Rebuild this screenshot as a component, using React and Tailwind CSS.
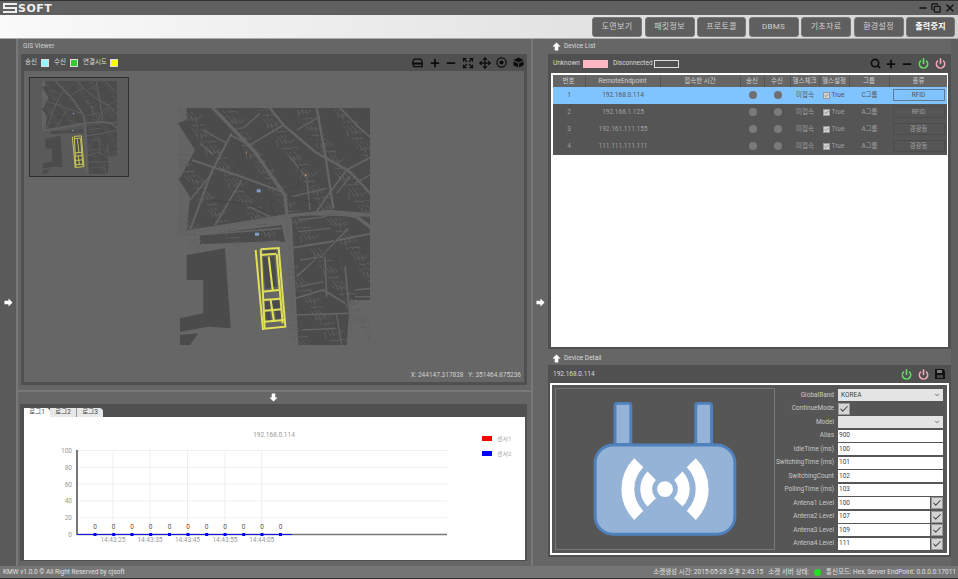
import { Plus, Minus, Move, Expand, Power, Search, Copy, X, Check, ChevronDown } from 'lucide-react';

const menus = [
  { label: '도면보기', w: 'w-[50px]' },
  { label: '패킷정보', w: 'w-[50px]' },
  { label: '프로토콜', w: 'w-[49px]' },
  { label: 'DBMS', w: 'w-[50px]' },
  { label: '기초자료', w: 'w-[50px]' },
  { label: '환경설정', w: 'w-[50px]' },
  { label: '출력중지', w: 'w-[49px]', active: true },
];

const devices = [
  { id: 1, ip: '192.168.0.114', group: 'C그룹', type: 'RFID' },
  { id: 2, ip: '192.168.1.125', group: 'A그룹', type: 'RFID' },
  { id: 3, ip: '192.161.111.155', group: 'A그룹', type: '경광등' },
  { id: 4, ip: '111.111.111.111', group: 'A그룹', type: '경광등' },
];

const fields = [
  { label: 'GlobalBand', kind: 'select', value: 'KOREA' },
  { label: 'ContinueMode', kind: 'check' },
  { label: 'Model', kind: 'select', value: '' },
  { label: 'Alias', value: '900' },
  { label: 'IdleTime (ms)', value: '100' },
  { label: 'SwitchingTime (ms)', value: '101' },
  { label: 'SwitchingCount', value: '102' },
  { label: 'PollingTime (ms)', value: '103' },
  { label: 'Antena1 Level', value: '100', toggle: true },
  { label: 'Antena2 Level', value: '107', toggle: true },
  { label: 'Antena3 Level', value: '109', toggle: true },
  { label: 'Antena4 Level', value: '111', toggle: true },
];

const tableCols = 'grid grid-cols-[33px_75px_80px_24px_26px_29px_30px_40px_58px]';

// roads of the map, in the 630x750 space of the drawing
const roads = [
  ['125,20 250,150 345,285 358,420 372,740', 10],
  ['24,405 200,375 345,348 480,335 560,350 605,385', 10],
  ['300,24 340,75 435,155 540,215 605,285', 7],
  ['440,24 465,160 490,325', 7],
  ['65,180 200,225 335,275', 6],
  ['185,100 125,215 62,385', 6],
  ['605,170 530,210 470,290 440,335', 5],
  ['360,445 480,425 605,400', 6],
  ['380,530 470,450 535,385', 5],
  ['375,595 460,570 525,610', 5],
  ['375,645 540,640', 5],
  ['510,24 570,85 605,115', 5],
  ['340,75 240,135 180,105', 5],
  ['130,215 60,300', 5],
  ['215,240 135,375', 5],
  ['235,320 300,350', 4],
  ['365,290 470,265', 4],
  ['360,170 410,235 420,330', 4],
  ['85,405 335,385', 5],
  ['85,435 330,425', 5],
  ['465,470 470,590', 5],
  ['525,500 545,700', 5],
  ['500,645 515,735', 4],
  ['555,570 605,565', 4],
  ['555,590 605,590', 4],
  ['385,360 470,350', 4],
  ['385,395 480,385', 4],
  ['540,230 500,280', 4],
  ['555,250 600,225', 4],
  ['380,90 450,50', 4],
  ['270,40 220,85', 4],
  ['100,90 170,130', 4],
  ['90,130 130,165', 4],
  ['390,480 460,470', 4],
  ['390,560 460,545', 4],
  ['395,690 500,685', 4],
];

// dark hairline streets between the blocks
const darkLines = [
  '210,130 220,175 190,210',
  '390,200 385,260 360,270',
  '360,290 440,310',
  '120,300 230,310 300,340',
  '300,300 310,345',
  '395,525 520,395',
  '470,500 500,470 510,520',
  '480,560 520,600',
];

const yellow = [
  '257,450 279,690',
  '272,448 326,444 346,680 284,686 272,448',
  '272,465 318,461',
  '320,462 338,670',
  '276,575 328,570',
  '278,600 331,596',
  '284,665 342,660',
  '296,470 308,570',
  '302,600 312,665',
  '282,632 335,628',
];

const lotBuildings = [
  '278,472 294,470 303,565 286,567',
  '300,470 313,468 321,560 309,562',
  '284,605 299,604 301,628 286,630',
  '305,603 328,601 330,626 308,628',
  '288,636 300,635 304,662 290,663',
  '316,632 333,630 336,656 318,658',
  '278,452 318,449 319,458 280,461',
];

// deterministic alley lines so both map copies look alike
const alleys = [];
for (let i = 0; i < 900; i++) {
  const x = 26 + ((i * 137) % 572);
  const y = 26 + ((i * 211) % 705);
  if (y > 430 && x < 352) continue;
  const len = 8 + (i % 6) * 3;
  const dir = i % 4;
  const dx = dir === 0 ? len : dir === 1 ? len * 0.7 : dir === 2 ? 3 : len * 0.8;
  const dy = dir === 0 ? 3 : dir === 1 ? len * 0.7 : dir === 2 ? len : -len * 0.6;
  alleys.push(`M${x} ${y}l${dx.toFixed(1)} ${dy.toFixed(1)}`);
}

function CityMap({ className }) {
  return (
    <svg viewBox="24 24 576 711" className={className}>
      <polygon fill="#4b4b4b" points="24,24 600,24 600,340 480,330 340,345 24,395" />
      <polygon fill="#4b4b4b" points="365,345 600,350 600,600 540,600 530,735 385,735" />
      <polygon fill="#4b4b4b" points="90,405 335,375 345,425 90,435" />
      <polygon fill="#646464" points="24,24 50,24 50,60 24,70" />
      <polygon fill="#646464" points="24,70 75,150 30,235 24,235" />
      <polygon fill="#646464" points="24,235 60,290 50,395 24,395" />
      <path d={alleys.join('')} stroke="#5e5e5e" strokeWidth="3" fill="none" />
      <polygon fill="#4b4b4b" points="50,465 165,445 182,685 115,680 30,695 30,655 100,640 100,540 50,540" />
      <polygon fill="#4b4b4b" points="30,705 85,700 60,735 30,735" />
      {roads.map(([points, width]) => (
        <polyline key={points} points={points} fill="none" stroke="#646464" strokeWidth={width} />
      ))}
      {darkLines.map((points) => (
        <polyline key={points} points={points} fill="none" stroke="#444" strokeWidth="3" />
      ))}
      {lotBuildings.map((points) => (
        <polygon key={points} points={points} fill="#4b4b4b" />
      ))}
      {yellow.map((points) => (
        <polyline key={points} points={points} fill="none" stroke="#e0e055" strokeWidth="6" />
      ))}
      <rect x="260" y="268" width="12" height="9" fill="#7f9fc4" />
      <rect x="255" y="398" width="12" height="9" fill="#7f9fc4" />
      <rect x="227" y="155" width="4" height="6" fill="#a0714f" />
      <rect x="405" y="222" width="4" height="6" fill="#b89270" />
    </svg>
  );
}

function BlockArrow({ className }) {
  return (
    <svg viewBox="0 0 10 10" className={`w-[9px] h-[9px] ${className}`}>
      <path d="M5 0.5L9.5 5H7V9.5H3V5H0.5Z" fill="#fff" />
    </svg>
  );
}

function CheckBox({ className }) {
  return (
    <span className={`flex items-center justify-center bg-[#d4d4d4] border border-[#999] ${className}`}>
      <Check className="w-full h-full text-[#444]" strokeWidth={2.5} />
    </span>
  );
}

function Swatch({ className }) {
  return <span className={`block shrink-0 border border-[#ddd] ${className}`} />;
}

function GisToolbarIcons() {
  return (
    <div className="flex items-center gap-[2.7px] text-[#0c0c0c] -mr-[1px] [&>*]:w-[14px] [&>*]:flex [&>*]:justify-center">
      <span>
        <svg viewBox="0 0 14 12" className="w-[11px] h-[10px]">
          <path d="M3 1H11L13 4V10.5H2.5L1 7V4Z" fill="none" stroke="currentColor" strokeWidth="1.6" />
          <path d="M1 5.5H13V8H1Z" fill="currentColor" />
        </svg>
      </span>
      <span><Plus className="w-[12px] h-[12px]" strokeWidth={3.5} /></span>
      <span><Minus className="w-[12px] h-[12px]" strokeWidth={3.5} /></span>
      <span><Expand className="w-[12px] h-[12px]" strokeWidth={2.5} /></span>
      <span><Move className="w-[12px] h-[12px]" strokeWidth={2.5} /></span>
      <span>
        <svg viewBox="0 0 12 12" className="w-[11px] h-[11px]">
          <circle cx="6" cy="6" r="5" fill="none" stroke="currentColor" strokeWidth="1.3" />
          <circle cx="6" cy="6" r="2.2" fill="currentColor" />
        </svg>
      </span>
      <span>
        <svg viewBox="0 0 12 12" className="w-[11px] h-[11px]">
          <path d="M6 0.5L11.5 3.2L6 5.9L0.5 3.2Z" fill="currentColor" />
          <path d="M0.5 4.6L5.5 7V11.5L0.5 9Z M11.5 4.6L6.5 7V11.5L11.5 9Z" fill="currentColor" />
        </svg>
      </span>
    </div>
  );
}

function LogChart() {
  const ticks = [0, 20, 40, 60, 80, 100];
  const points = [71, 89.7, 108, 126.7, 145.5, 164, 182.7, 201, 219.7, 238, 256.5];
  const times = [
    [89, '14:43:25'],
    [126, '14:43:35'],
    [163.5, '14:43:45'],
    [201, '14:43:55'],
    [237.7, '14:44:05'],
  ];
  const yOf = (v) => 117.5 - v * 0.84;

  return (
    <svg width="501" height="143" className="block">
      <text x="250" y="20" textAnchor="middle" fontSize="6.5" fill="#999">192.168.0.114</text>
      {ticks.map((t) => (
        <g key={t}>
          {t > 0 && <line x1="53" x2="423" y1={yOf(t)} y2={yOf(t)} stroke="#f0f0f0" />}
          <text x="48" y={yOf(t) + 2.5} textAnchor="end" fontSize="6.5" fill="#999">{t}</text>
        </g>
      ))}
      {times.map(([x, label]) => (
        <g key={label}>
          <line x1={x} x2={x} y1="33" y2="117" stroke="#eee" />
          <text x={x} y="125" textAnchor="middle" fontSize="6.5" fill="#999">{label}</text>
        </g>
      ))}
      <line x1="53" x2="53" y1="33" y2="118" stroke="#777" strokeWidth="2" />
      <line x1="53" x2="423" y1="117.5" y2="117.5" stroke="#777" strokeWidth="1.5" />
      <line x1="53" x2="268" y1="117.5" y2="117.5" stroke="#1414e0" strokeWidth="1.2" />
      {points.map((x) => (
        <g key={x}>
          <rect x={x - 1.5} y="116" width="3" height="3" fill="#0000ee" />
          <text x={x} y="112" textAnchor="middle" fontSize="6.5" fill="#555">0</text>
        </g>
      ))}
      <rect x="458" y="19" width="10" height="5" fill="#ff0000" />
      <text x="473" y="24" fontSize="6" fill="#aaa">센서1</text>
      <rect x="458" y="34" width="10" height="5" fill="#0000ff" />
      <text x="473" y="39" fontSize="6" fill="#aaa">센서2</text>
    </svg>
  );
}

function RouterIcon() {
  return (
    <svg viewBox="0 0 220 161" className="w-full h-full">
      <g fill="#95b3d7" stroke="#4f81bd" strokeWidth="3">
        <path d="M59.5 56V17a2.5 2.5 0 0 1 2.5-2.5h11a2.5 2.5 0 0 1 2.5 2.5V56Z" />
        <path d="M141 56V17a2.5 2.5 0 0 1 2.5-2.5h11a2.5 2.5 0 0 1 2.5 2.5V56Z" />
        <rect x="39.5" y="56.5" width="141" height="90" rx="18" />
      </g>
      <g transform="translate(110 101)" fill="none" stroke="#fff">
        <circle r="8" fill="#fff" stroke="none" />
        <path d="M-13.4 -13.4A19 19 0 0 0 -13.4 13.4M13.4 -13.4A19 19 0 0 1 13.4 13.4" strokeWidth="12" />
        <path d="M-26.5 -26.5A37.5 37.5 0 0 0 -26.5 26.5M26.5 -26.5A37.5 37.5 0 0 1 26.5 26.5" strokeWidth="13" />
      </g>
    </svg>
  );
}

function DeviceRow({ device, selected }) {
  const text = selected ? 'text-[#555]' : 'text-[#a0a0a0]';
  return (
    <div className={`${tableCols} h-[17px] items-center text-center ${text} ${selected ? 'bg-[#80c4ff]' : 'bg-[#555555]'}`}>
      <span>{device.id}</span>
      <span>{device.ip}</span>
      <span />
      <span className={`justify-self-center w-[8px] h-[8px] rounded-full ${selected ? 'bg-[#707070]' : 'bg-[#7a7a7a]'}`} />
      <span className={`justify-self-center w-[8px] h-[8px] rounded-full ${selected ? 'bg-[#707070]' : 'bg-[#7a7a7a]'}`} />
      <span>미접속</span>
      <span className="flex items-center gap-[2px] pl-[3px]">
        <CheckBox className="w-[7px] h-[7px]" />
        True
      </span>
      <span>{device.group}</span>
      <span className={`mx-[3px] h-[12px] leading-[10px] border ${selected ? 'border-[#5f7a92]' : 'border-[#4b4b4b]'}`}>{device.type}</span>
    </div>
  );
}

function DetailField({ field }) {
  return (
    <div className="flex items-center h-[12px]">
      <span className="w-[56px] flex justify-end text-[#c8c8c8] whitespace-nowrap">{field.label}</span>
      <div className="flex flex-1 ml-[4px] h-full text-[#444] gap-[1px]">
        {field.kind === 'check' ? (
          <CheckBox className="w-[12px] h-[12px]" />
        ) : field.kind === 'select' ? (
          <div className="flex-1 bg-[#e4e4e4] flex items-center justify-between px-[3px]">
            <span>{field.value}</span>
            <ChevronDown className="w-[6px] h-[6px]" strokeWidth={3} />
          </div>
        ) : (
          <div className="flex-1 bg-white flex items-center px-[1px]">{field.value}</div>
        )}
        {field.toggle && <CheckBox className="w-[12px] h-[12px]" />}
      </div>
    </div>
  );
}

export default function App() {
  return (
    <div className="w-[958px] h-[579px] flex flex-col overflow-hidden bg-[#666666] text-[6.5px] leading-none text-[#d8d8d8] [font-family:'Roboto','Noto_Sans_CJK_KR',sans-serif]">
      {/* title bar */}
      <div className="h-[15px] flex items-center justify-between bg-[#606060] border-t border-[#333] pl-[3px] pr-[2px]">
        <div className="flex items-center gap-[1px]">
          <svg viewBox="0 0 14 10" className="w-[14px] h-[10px]">
            <path d="M0 0H14V2H2V4H14V10H0V8H12V6H0Z" fill="#eee" />
          </svg>
          <span className="text-[11px] font-bold tracking-[0.5px] text-[#eee] [font-family:'DejaVu_Sans',sans-serif]">SOFT</span>
        </div>
        <div className="flex items-center gap-[3px] text-[#111]">
          <Minus className="w-[10px] h-[10px]" strokeWidth={4} />
          <Copy className="w-[10px] h-[10px]" strokeWidth={3} />
          <X className="w-[12px] h-[12px]" strokeWidth={3} />
        </div>
      </div>

      {/* ribbon */}
      <div className="h-[24px] flex items-center justify-end gap-[2.5px] pr-[3px] bg-gradient-to-r from-[#fafafa] to-[#d4d4d4] border-b border-[#aaa]">
        {menus.map((menu) => (
          <button
            key={menu.label}
            className={`${menu.w} h-[20px] rounded-[3px] bg-[#5f5f5f] border border-[#777] text-[8px] tracking-[0.3px] ${menu.active ? 'text-white font-bold' : 'text-[#cfcfcf]'}`}
          >
            {menu.label}
          </button>
        ))}
      </div>

      {/* main */}
      <div className="flex-1 flex min-h-0">
        <div className="w-[18px] flex items-center justify-center bg-[#5a5a5a] border-r-2 border-[#787878]">
          <BlockArrow className="rotate-90" />
        </div>

        {/* left column */}
        <div className="w-[513px] flex flex-col">
          <div className="h-[15px] flex items-center pl-[5px] text-[#cfcfcf]">GIS Viewer</div>

          <div className="h-[331px] ml-[3px] mr-[4px] flex flex-col bg-[#505050] px-[3px] pb-[3px]">
            <div className="h-[17px] shrink-0 flex items-center justify-between">
              <div className="flex items-center pl-[1px] whitespace-nowrap">
                <span className="w-[12px]">송신</span>
                <Swatch className="w-[8px] h-[8px] ml-[4px] mr-[5px] bg-[#8ff5ff]" />
                <span className="w-[11px]">수신</span>
                <Swatch className="w-[8px] h-[8px] ml-[5px] mr-[5px] bg-[#33cc33]" />
                <span className="w-[23px]">연결시도</span>
                <Swatch className="w-[8px] h-[8px] ml-[4px] bg-[#ffff00]" />
              </div>
              <GisToolbarIcons />
            </div>
            <div className="relative flex-1 bg-[#666666]">
              <div className="absolute left-[5px] top-[6px] w-[100px] h-[100px] bg-[#5a5a5a] border border-[#2f2f2f] flex justify-center items-center">
                <CityMap className="w-[75px] h-[93px]" />
              </div>
              <CityMap className="absolute left-[154px] top-[37px] w-[192px] h-[237px]" />
              <span className="absolute right-[3px] bottom-[4px] text-[#d0d0d0] whitespace-nowrap">X: 244147.317828 &nbsp; Y: 351464.875236</span>
            </div>
          </div>

          {/* splitter */}
          <div className="h-[19px] pt-[5px]">
            <div className="h-full border-t-2 border-[#787878] flex items-center justify-center pb-[1px] pr-[3px]">
              <BlockArrow className="rotate-180" />
            </div>
          </div>

          <div className="h-[157px] ml-[2px] mr-[4px] flex flex-col bg-[#505050] pl-[4px] pr-[2px] pb-[1px]">
            <div className="h-[13px] shrink-0 flex items-end text-[#444]">
              <span className="h-[9px] w-[26px] flex items-center justify-center bg-white rounded-tr-[4px]">로그1</span>
              <span className="h-[9px] w-[27px] flex items-center justify-center bg-[#e8e8e8] border-r border-[#999]">로그2</span>
              <span className="h-[9px] w-[26px] flex items-center justify-center bg-[#e8e8e8] rounded-tr-[4px]">로그3</span>
            </div>
            <div className="flex-1 bg-white">
              <LogChart />
            </div>
          </div>
        </div>

        {/* center strip */}
        <div className="w-[17px] flex items-center justify-center border-l-2 border-[#787878]">
          <BlockArrow className="rotate-90" />
        </div>

        {/* right column */}
        <div className="w-[403px] flex flex-col">
          <div className="h-[15px] flex items-center gap-[3px] pl-[4px]">
            <BlockArrow />
            <span>Device List</span>
          </div>

          <div className="h-[295px] flex flex-col bg-[#505050] px-[3px] pb-[2px]">
            <div className="h-[19px] shrink-0 flex items-center justify-between pr-[2px]">
              <div className="flex items-center pl-[2px] whitespace-nowrap">
                <span className="w-[26px]">Unknown</span>
                <Swatch className="w-[25px] h-[8px] ml-[4px] mr-[5px] bg-[#ffb6c1] border-[#ffb6c1]" />
                <span className="w-[37px]">Disconnected</span>
                <Swatch className="w-[25px] h-[8px] ml-[4px] border-[#bbb]" />
              </div>
              <div className="flex items-center gap-[4px] text-[#0c0c0c]">
                <Search className="w-[11px] h-[11px]" strokeWidth={3.5} />
                <Plus className="w-[12px] h-[12px]" strokeWidth={3.5} />
                <Minus className="w-[12px] h-[12px]" strokeWidth={3.5} />
                <Power className="w-[11px] h-[11px] ml-[1px] text-[#66dd66]" strokeWidth={3.5} />
                <Power className="w-[11px] h-[11px] ml-[2px] text-[#f0a8b8]" strokeWidth={3.5} />
              </div>
            </div>
            <div className="flex-1 bg-white p-[1.5px]">
              <div className={`${tableCols} h-[12px] items-center text-center bg-[#666666] text-[#cfcfcf] divide-x divide-[#555]`}>
                {['번호', 'RemoteEndpoint', '접속한 시간', '송신', '수신', '헬스체크', '헬스설정', '그룹', '종류'].map((h) => (
                  <span key={h} className="leading-[12px]">{h}</span>
                ))}
              </div>
              {devices.map((device, i) => (
                <DeviceRow key={device.id} device={device} selected={i === 0} />
              ))}
            </div>
          </div>

          <div className="h-[16px] flex items-center gap-[3px] pl-[4px] pt-[2px]">
            <BlockArrow />
            <span>Device Detail</span>
          </div>

          <div className="h-[192px] flex flex-col bg-[#505050] px-[2px] pb-[3px]">
            <div className="h-[18px] shrink-0 flex items-center justify-between pl-[3px] pr-[4px]">
              <span>192.168.0.114</span>
              <div className="flex items-center gap-[6px]">
                <Power className="w-[11px] h-[11px] text-[#66dd66]" strokeWidth={3.5} />
                <Power className="w-[11px] h-[11px] text-[#f0a8b8]" strokeWidth={3.5} />
                <svg viewBox="0 0 10 10" className="w-[10px] h-[10px]">
                  <path d="M0 0H8L10 2V10H0Z" fill="#111" />
                  <rect x="2" y="1" width="5" height="3" fill="#777" />
                  <rect x="2" y="6" width="6" height="3" fill="#444" />
                </svg>
              </div>
            </div>
            <div className="flex-1 flex gap-[3px] border-2 border-white bg-[#565656] p-[3px] pr-[4px]">
              <div className="w-[220px] border border-[#777]">
                <RouterIcon />
              </div>
              <div className="flex-1 flex flex-col gap-[1.5px] pt-[1px]">
                {fields.map((field) => (
                  <DetailField key={field.label} field={field} />
                ))}
              </div>
            </div>
          </div>
        </div>

        <div className="flex-1 bg-[#5f5f5f]" />
      </div>

      {/* status bar */}
      <div className="h-[13px] flex items-center justify-between bg-[#757575] border-b border-[#333] pl-[3px] pr-[2px] text-[#e0e0e0] whitespace-nowrap">
        <span>KMW v1.0.0 © All Right Reserved by cjsoft</span>
        <div className="flex items-center">
          <span>소켓생성 시간: 2015-05-28 오후 2:43:15</span>
          <span className="ml-[5px]">소켓 서버 상태:</span>
          <span className="w-[7px] h-[7px] rounded-full bg-[#22e022] mx-[5px]" />
          <span>통신모드: Hex, Server EndPoint: 0.0.0.0:17011</span>
        </div>
      </div>
    </div>
  );
}
